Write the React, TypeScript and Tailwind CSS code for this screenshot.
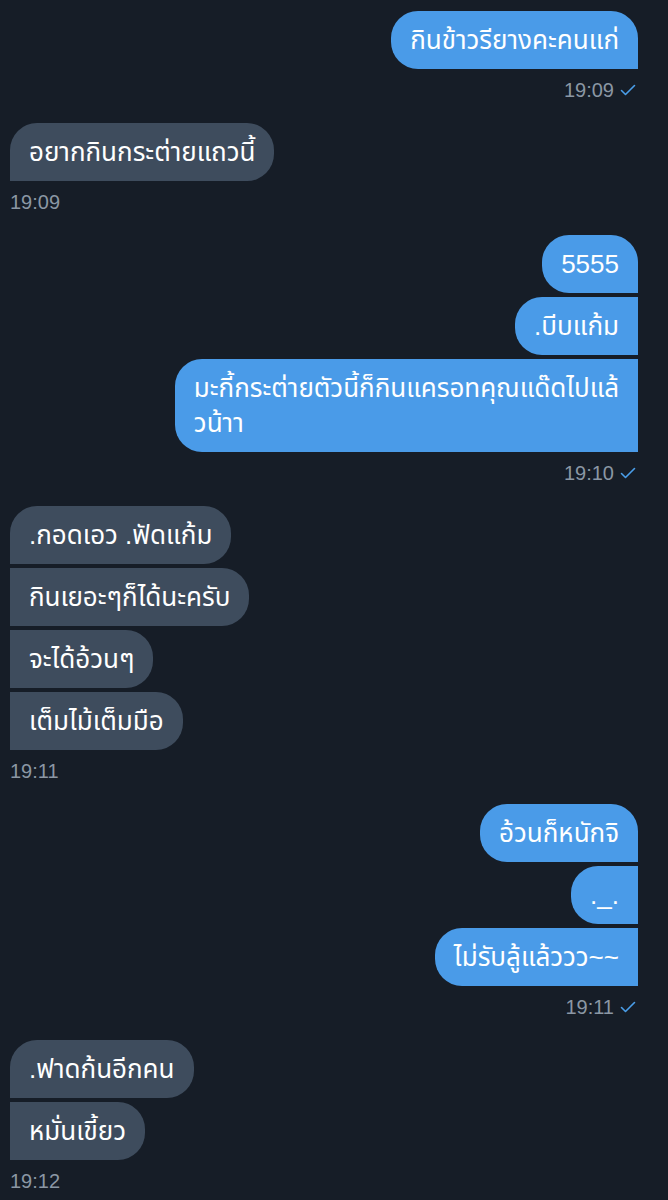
import React from "react";

type Side = "in" | "out";
type Group = { side: Side; messages: React.ReactNode[]; time: string };

const groups: Group[] = [
  { side: "out", messages: ["กินข้าวรียางคะคนแก่"], time: "19:09" },
  { side: "in", messages: ["อยากกินกระต่ายแถวนี้"], time: "19:09" },
  {
    side: "out",
    messages: [
      "5555",
      ".บีบแก้ม",
      <>
        มะกี้กระต่ายตัวนี้ก็กินแครอทคุณแด๊ดไปแล้
        <br />
        วน้าา
      </>,
    ],
    time: "19:10",
  },
  {
    side: "in",
    messages: [".กอดเอว .ฟัดแก้ม", "กินเยอะๆก็ได้นะครับ", "จะได้อ้วนๆ", "เต็มไม้เต็มมือ"],
    time: "19:11",
  },
  { side: "out", messages: ["อ้วนก็หนักจิ", "._.", "ไม่รับลู้แล้ววว~~"], time: "19:11" },
  { side: "in", messages: [".ฟาดก้นอีกคน", "หมั่นเขี้ยว"], time: "19:12" },
];

function corners(side: Side, i: number) {
  // first bubble keeps its outer top corner, the rest are squared on the sender's side
  if (side === "out") {
    return i === 0 ? "rounded-[27px] rounded-br-none" : "rounded-[27px] rounded-r-none";
  }
  return i === 0 ? "rounded-[27px] rounded-bl-none" : "rounded-[27px] rounded-l-none";
}

function Check() {
  return (
    <svg width="16" height="12" viewBox="0 0 16 12" fill="none" className="ml-[6px]">
      <polyline points="1.5,6.5 5.5,10.5 14.5,1.5" stroke="#4a9ee9" strokeWidth="1.6" strokeLinecap="round" strokeLinejoin="round" />
    </svg>
  );
}

export default function App() {
  return (
    <div
      className="min-h-[1200px] w-[668px] bg-[#161d27] pt-[11px] pl-[10px] pr-[30px]"
      style={{ fontFamily: '"Liberation Sans", "Noto Sans Thai", "Noto Sans", sans-serif' }}
    >
      {groups.map((g, gi) => (
        <div key={gi} className={`flex flex-col mb-[20px] ${g.side === "out" ? "items-end" : "items-start"}`}>
          <div className={`flex flex-col gap-[4px] ${g.side === "out" ? "items-end" : "items-start"}`}>
            {g.messages.map((m, i) => (
              <div
                key={i}
                className={`whitespace-nowrap px-[19px] pt-[12px] pb-[11px] text-[26px] leading-[35px] text-white ${
                  g.side === "out" ? "bg-[#4a9be8]" : "bg-[#3e4c5d]"
                } ${corners(g.side, i)}`}
              >
                {m}
              </div>
            ))}
          </div>
          <div className="mt-[8px] flex items-center h-[26px] text-[20px] text-[#8b97a4] pr-[2px]">
            <span>{g.time}</span>
            {g.side === "out" && <Check />}
          </div>
        </div>
      ))}
    </div>
  );
}
